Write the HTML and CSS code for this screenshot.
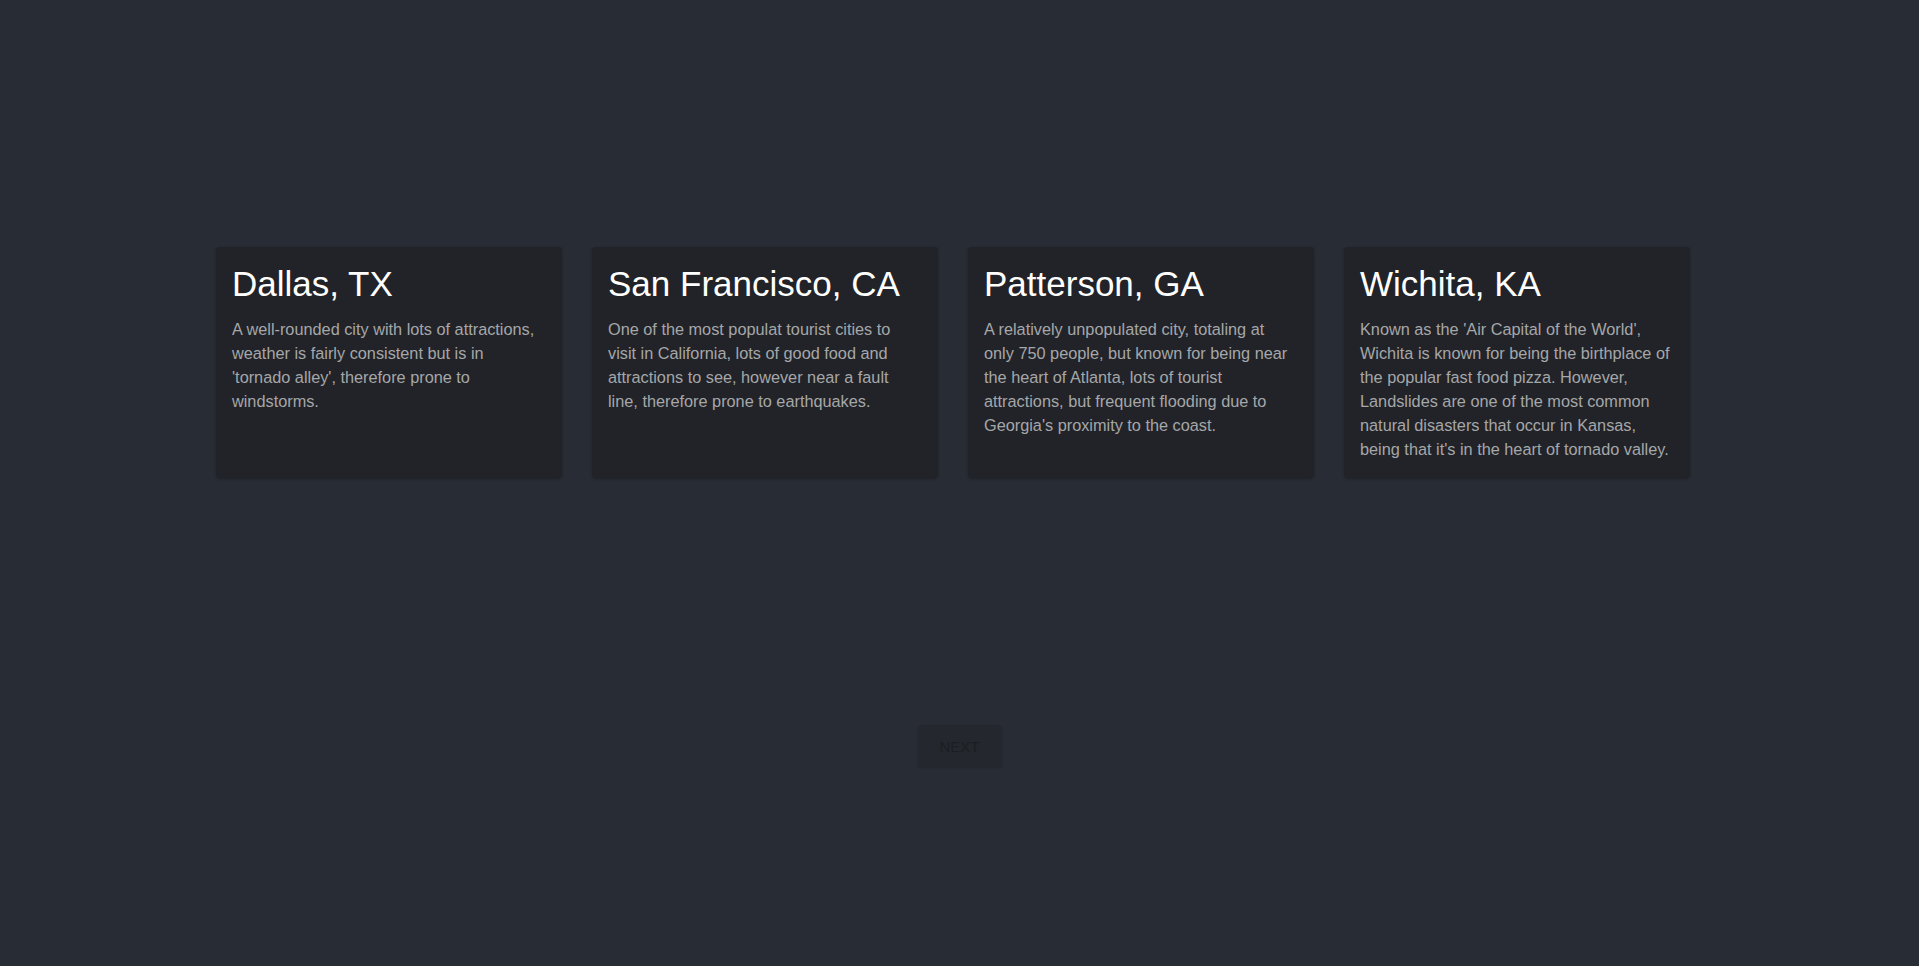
FILE: index.html
```html
<!DOCTYPE html>
<html lang="en">
<head>
<meta charset="utf-8">
<title>Cities</title>
<link rel="stylesheet" href="styles.css">
</head>
<body>
<main class="page">
  <section class="cards">
    <article class="card">
      <h2 class="card-title">Dallas, TX</h2>
      <p class="card-text">A well-rounded city with lots of attractions, weather is fairly consistent but is in 'tornado alley', therefore prone to windstorms.</p>
    </article>
    <article class="card">
      <h2 class="card-title">San Francisco, CA</h2>
      <p class="card-text">One of the most populat tourist cities to visit in California, lots of good food and attractions to see, however near a fault line, therefore prone to earthquakes.</p>
    </article>
    <article class="card">
      <h2 class="card-title">Patterson, GA</h2>
      <p class="card-text">A relatively unpopulated city, totaling at only 750 people, but known for being near the heart of Atlanta, lots of tourist attractions, but frequent flooding due to Georgia's proximity to the coast.</p>
    </article>
    <article class="card">
      <h2 class="card-title">Wichita, KA</h2>
      <p class="card-text">Known as the 'Air Capital of the World', Wichita is known for being the birthplace of the popular fast food pizza. However, Landslides are one of the most common natural disasters that occur in Kansas, being that it's in the heart of tornado valley.</p>
    </article>
  </section>
  <div class="actions">
    <button class="next" disabled>NEXT</button>
  </div>
</main>
</body>
</html>
```

FILE: styles.css
```css
html, body {
  margin: 0;
  padding: 0;
  background: #282c34;
  height: 100%;
}
body {
  font-family: "Liberation Sans", Arial, sans-serif;
}
.page {
  padding-top: 247px;
  padding-left: 216px;
  padding-right: 229px;
}
.cards {
  display: grid;
  grid-template-columns: repeat(4, 346px);
  column-gap: 30px;
}
.card {
  background: #212328;
  border-radius: 4px;
  padding: 15px 18px 17px 16px;
  min-height: 199px;
  box-shadow: 0 1px 3px rgba(0, 0, 0, 0.25);
}
.card-title {
  margin: 0 0 12px 0;
  font-size: 35px;
  line-height: 43px;
  font-weight: 400;
  color: #ffffff;
}
.card-text {
  margin: 0;
  font-size: 16.3px;
  line-height: 24px;
  color: #a6a7a9;
}
.actions {
  display: flex;
  justify-content: center;
  margin-top: 247px;
  margin-left: -216px;
  margin-right: -229px;
}
.next {
  width: 84px;
  height: 42px;
  border: none;
  border-radius: 4px;
  background: #24272d;
  color: #1c1e23;
  font-family: "Liberation Sans", Arial, sans-serif;
  font-size: 15px;
  padding: 0;
  box-shadow: 0 1px 2px rgba(0, 0, 0, 0.15);
}
```
